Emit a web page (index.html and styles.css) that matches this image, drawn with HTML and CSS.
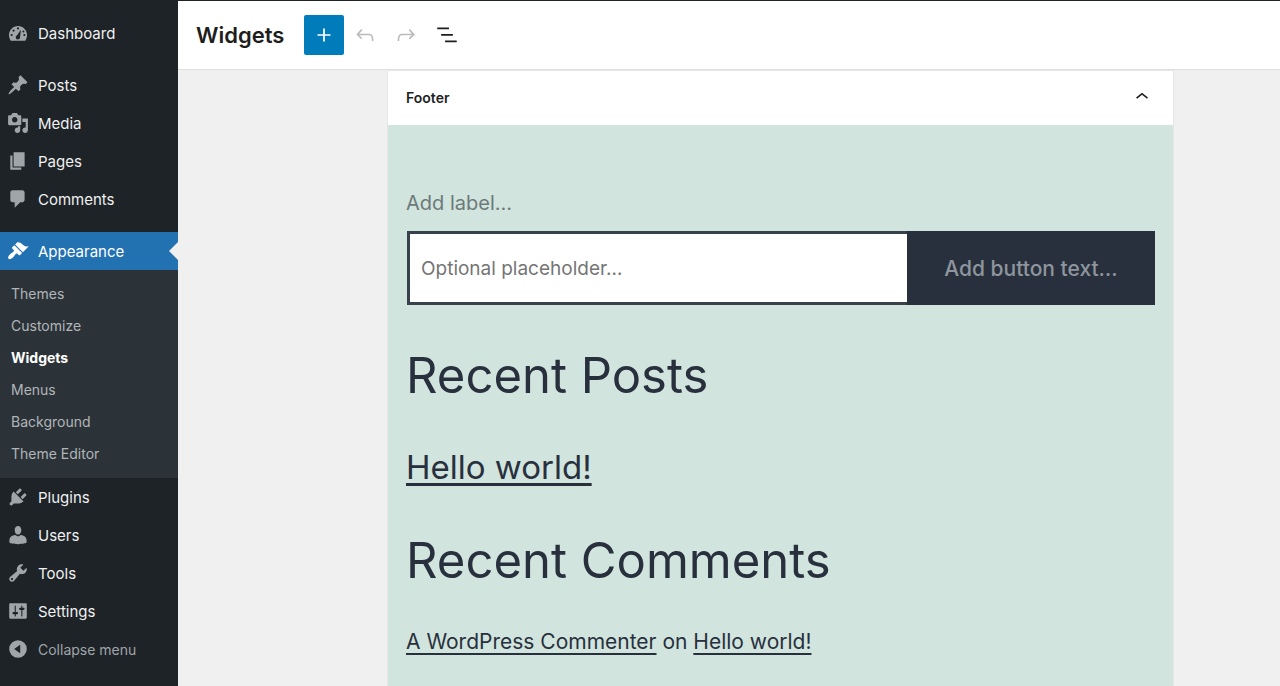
FILE: index.html
```html
<!DOCTYPE html>
<html lang="en">
<head>
<meta charset="utf-8">
<title>Widgets</title>
<link rel="stylesheet" href="styles.css">
</head>
<body>
<div class="app">
  <nav class="sidebar" aria-label="Main menu">
    <ul class="menu">
      <li><a class="menu-link" href="#"><svg class="menu-icon" viewBox="0 0 20 20"><path fill-rule="evenodd" d="M3.400 17h13.200C17.600 15.400 18.200 13.700 18.200 11.800c0-4.500-3.700-8.200-8.200-8.200s-8.200 3.700-8.200 8.200c0 1.900.6 3.600 1.600 5.200zM9 5.800a1 1 0 1 0 2 0 1 1 0 1 0-2 0zM5 7.800a1 1 0 1 0 2 0 1 1 0 1 0-2 0zM3.200 11.800a1 1 0 1 0 2 0 1 1 0 1 0-2 0zM14.800 11.800a1 1 0 1 0 2 0 1 1 0 1 0-2 0zM12.700 6.800l-.8 6.600a2 2 0 1 1-2.700-1.400zM14 8.600a.9.9 0 1 0 1.800 0 .9.9 0 1 0-1.800 0z"/></svg>Dashboard</a></li>
    </ul>
    <ul class="menu menu-content">
      <li><a class="menu-link" href="#"><svg class="menu-icon" viewBox="0 0 20 20"><path d="M10.44 3.02l1.82-1.82 6.36 6.35-1.83 1.82c-1.05-.68-2.48-.57-3.41.36l-.75.75c-.92.93-1.04 2.35-.35 3.41l-1.83 1.82-2.41-2.41-2.8 2.79c-.42.42-3.38 2.71-3.8 2.29s1.86-3.39 2.28-3.81l2.79-2.79L4.1 9.36l1.83-1.82c1.05.69 2.48.57 3.4-.36l.75-.75c.93-.92 1.05-2.35.36-3.41z"/></svg>Posts</a></li>
      <li><a class="menu-link" href="#"><svg class="menu-icon" viewBox="0 0 20 20"><path fill-rule="evenodd" d="M13 11V4c0-.55-.45-1-1-1h-1.670L9 1H5L3.670 3H2c-.55 0-1 .45-1 1v7c0 .55.45 1 1 1h10c.55 0 1-.45 1-1zM7 4.500c1.380 0 2.500 1.120 2.500 2.500S8.380 9.500 7 9.500 4.500 8.380 4.500 7 5.620 4.500 7 4.500zM14 6h5v10.500c0 1.380-1.120 2.500-2.500 2.500S14 17.880 14 16.500s1.120-2.500 2.500-2.500c.17 0 .34.02.5.05V9h-3V6zm-4 8.050V13h2v3.500c0 1.380-1.120 2.500-2.500 2.500S7 17.880 7 16.500 8.120 14 9.500 14c.17 0 .34.02.5.05z"/></svg>Media</a></li>
      <li><a class="menu-link" href="#"><svg class="menu-icon" viewBox="0 0 20 20"><path d="M6 15V2h10v13H6zm-1 1h8v2H3V5h2v11z"/></svg>Pages</a></li>
      <li><a class="menu-link" href="#"><svg class="menu-icon" viewBox="0 0 20 20"><path d="M5 2h9c1.100 0 2 .9 2 2v7c0 1.100-.9 2-2 2h-2l-5 5v-5H5c-1.100 0-2-.9-2-2V4c0-1.100.9-2 2-2z"/></svg>Comments</a></li>
    </ul>
    <ul class="menu menu-admin">
      <li>
        <a class="menu-link current" href="#"><svg class="menu-icon" viewBox="0 0 20 20"><path d="M14.48 11.06L7.41 3.99l1.5-1.5c.5-.56 2.3-.47 3.51.32 1.21.8 1.43 1.28 2.91 2.1 1.18.64 2.45 1.26 4.45.85zm-.71.71L6.7 4.7 4.93 6.47c-.39.39-.39 1.02 0 1.41l1.06 1.06c.39.39.39 1.03 0 1.42-.6.6-1.43 1.11-2.21 1.69-.35.26-.7.53-1.01.84C1.43 14.23.4 16.08 1.4 17.07c.99 1 2.84-.03 4.18-1.36.31-.31.58-.66.85-1.02.57-.78 1.08-1.61 1.69-2.21.39-.39 1.02-.39 1.41 0l1.06 1.06c.39.39 1.02.39 1.41 0z"/></svg>Appearance</a>
        <ul class="submenu">
          <li><a href="#">Themes</a></li>
          <li><a href="#">Customize</a></li>
          <li><a class="selected" href="#" aria-current="page">Widgets</a></li>
          <li><a href="#">Menus</a></li>
          <li><a href="#">Background</a></li>
          <li><a href="#">Theme Editor</a></li>
        </ul>
      </li>
      <li><a class="menu-link" href="#"><svg class="menu-icon" viewBox="0 0 20 20"><path d="M13.11 4.36L9.87 7.6 8 5.73l3.24-3.24c.35-.34 1.05-.2 1.56.32.52.51.66 1.21.31 1.55zm-8 1.77l.91-1.12 9.01 9.01-1.19.84c-.71.71-2.63 1.16-3.82 1.16H6.14L4.9 17.26c-.59.59-1.54.59-2.12 0-.59-.58-.59-1.53 0-2.12l1.24-1.24v-3.88c0-1.13.4-3.19 1.09-3.89zm7.26 3.97l3.24-3.24c.34-.35 1.04-.21 1.55.31.52.51.66 1.21.31 1.55l-3.24 3.25z"/></svg>Plugins</a></li>
      <li><a class="menu-link" href="#"><svg class="menu-icon" viewBox="0 0 20 20"><path d="M10 9.600c-2.200 0-3-2.200-3-4.100C7 3.500 8 1.800 10 1.800s3 1.700 3 3.700c0 1.900-.8 4.100-3 4.100zM10 11.300L12.600 10c2.700.2 5.200 2 5.200 4.800v2.300s-3.800 1.200-7.800 1.200-7.800-1.200-7.800-1.200v-2.300c0-2.800 2.500-4.600 5.200-4.800z"/></svg>Users</a></li>
      <li><a class="menu-link" href="#"><svg class="menu-icon" viewBox="0 0 20 20"><path fill-rule="evenodd" d="M16.68 9.77c-1.34 1.34-3.3 1.67-4.95.99l-5.41 6.52c-.99.99-2.59.99-3.58 0s-.99-2.59 0-3.57l6.52-5.42c-.68-1.65-.35-3.61.99-4.95 1.28-1.28 3.12-1.62 4.72-1.06l-2.89 2.89 2.82 2.82 2.86-2.87c.53 1.58.18 3.39-1.08 4.65zM3.81 16.21c.4.39 1.04.39 1.43 0 .4-.4.4-1.04 0-1.43-.39-.4-1.03-.4-1.43 0-.39.39-.39 1.03 0 1.43z"/></svg>Tools</a></li>
      <li><a class="menu-link" href="#"><svg class="menu-icon" viewBox="0 0 20 20"><path fill-rule="evenodd" d="M18 16V4c0-.55-.45-1-1-1H3c-.55 0-1 .45-1 1v12c0 .55.45 1 1 1h14c.55 0 1-.45 1-1zM8 11h1c.55 0 1 .45 1 1s-.45 1-1 1H8v1.500c0 .28-.22.5-.5.5s-.5-.22-.5-.5V13H6c-.55 0-1-.45-1-1s.45-1 1-1h1V5.500c0-.28.22-.5.5-.5s.5.22.5.5V11zm5-2h-1c-.55 0-1-.45-1-1s.45-1 1-1h1V5.500c0-.28.22-.5.5-.5s.5.22.5.5V7h1c.55 0 1 .45 1 1s-.45 1-1 1h-1v5.500c0 .28-.22.5-.5.5s-.5-.22-.5-.5V9z"/></svg>Settings</a></li>
      <li><button class="menu-link collapse" type="button"><svg class="menu-icon" viewBox="0 0 20 20"><path fill-rule="evenodd" d="M10 2a8 8 0 1 1 0 16 8 8 0 0 1 0-16zM12 13.800V6.200L6.500 10z"/></svg>Collapse menu</button></li>
    </ul>
  </nav>
  <main class="editor">
    <header class="toolbar">
      <h1 class="title">Widgets</h1>
      <button class="tool add" type="button" aria-label="Add block"><svg class="tool-icon" viewBox="0 0 24 24"><path d="M18 11.200h-5.200V6h-1.600v5.200H6v1.600h5.200V18h1.600v-5.200H18z"/></svg></button>
      <button class="tool muted" type="button" aria-label="Undo"><svg class="tool-icon" viewBox="0 0 24 24"><path d="M18.3 11.7c-.6-.6-1.4-.9-2.3-.9H6.700l2.900-3.300-1.100-1-4.500 5L8.500 16l1-1-2.700-2.700H16c.5 0 .9.2 1.300.5 1 1 1 3.400 1 4.500v.3h1.500v-.2c0-1.500 0-4.300-1.500-5.700z"/></svg></button>
      <button class="tool muted" type="button" aria-label="Redo"><svg class="tool-icon" viewBox="0 0 24 24"><path d="M15.600 6.500l-1.100 1 2.900 3.300H8c-.9 0-1.700.3-2.300.9-1.400 1.500-1.400 4.200-1.400 5.600v.2h1.500v-.3c0-1.100 0-3.500 1-4.500.3-.3.7-.5 1.300-.5h9.200L14.500 15l1.100 1.100 4.600-4.600-4.600-5z"/></svg></button>
      <button class="tool" type="button" aria-label="List view"><svg class="tool-icon" viewBox="0 0 24 24"><path d="M13.800 5H3v1.800h10.800V5zm-3.600 12v1.800H21V17H10.200zm7.200-6H6.600v1.800h10.800V11z"/></svg></button>
    </header>
    <div class="canvas">
      <section class="area">
        <h2 class="area-head"><button class="area-toggle" type="button" aria-expanded="true">Footer<svg class="tool-icon" viewBox="0 0 24 24"><path d="M6.500 12.400L12 8l5.500 4.400-.9 1.200L12 10l-4.500 3.600-1-1.200z"/></svg></button></h2>
        <div class="area-body">
          <form class="search">
            <label class="search-label" for="search-field">Add label…</label>
            <div class="search-row">
              <input class="search-input" id="search-field" type="text" placeholder="Optional placeholder…">
              <button class="search-button" type="button">Add button text…</button>
            </div>
          </form>
          <h2 class="heading">Recent Posts</h2>
          <p class="post"><a class="link" href="#">Hello world!</a></p>
          <h2 class="heading">Recent Comments</h2>
          <p class="comment"><a class="link" href="#">A WordPress Commenter</a> on <a class="link" href="#">Hello world!</a></p>
        </div>
      </section>
    </div>
  </main>
</div>
</body>
</html>
```
FILE: styles.css
```css
* { box-sizing: border-box; }
body {
  margin: 0;
  font-family: Inter, "Liberation Sans", sans-serif;
  color: #1e1e1e;
}
button, input { font: inherit; color: inherit; }
h1, h2, p, ul { margin: 0; padding: 0; }
ul { list-style: none; }
svg { flex: none; fill: currentColor; }

.app {
  display: flex;
  height: 100vh;
  overflow: hidden;
}

/* Sidebar */
.sidebar {
  flex: none;
  width: 178px;
  padding-top: 14px;
  background: #1d2327;
  overflow: hidden;
}
.menu-content { margin-top: 14px; }
.menu-admin { margin-top: 14px; }
.menu-link {
  position: relative;
  display: flex;
  align-items: center;
  gap: 9px;
  width: 100%;
  height: 38px;
  padding: 0 7px;
  border: 0;
  background: none;
  color: #f0f0f1;
  font-size: 15px;
  text-align: left;
  text-decoration: none;
}
.menu-icon {
  width: 22px;
  height: 22px;
  color: #a0a5aa;
}
.current { background: #2271b1; color: #fff; }
.current .menu-icon { color: #fff; }
.current::after {
  content: "";
  position: absolute;
  right: 0;
  top: 10px;
  border: 9px solid transparent;
  border-left-width: 0;
  border-right-color: #f0f0f1;
}
.submenu {
  padding: 8px 0;
  background: #2c3338;
}
.submenu a {
  display: block;
  padding: 0 11px;
  color: #b1b5b9;
  font-size: 14px;
  line-height: 32px;
  text-decoration: none;
}
.submenu .selected { color: #fff; font-weight: 700; }
.collapse { color: #a0a5aa; font-size: 14px; }

/* Editor */
.editor {
  flex: 1;
  min-width: 0;
  display: flex;
  flex-direction: column;
  border-top: 1px solid #1d2327;
  background: #f0f0f0;
}
.toolbar {
  flex: none;
  display: flex;
  align-items: center;
  gap: 1px;
  height: 69px;
  padding: 0 18px;
  border-bottom: 1px solid #e0e0e0;
  background: #fff;
}
.title {
  margin-right: 19px;
  font-size: 22px;
  font-weight: 600;
}
.tool {
  display: grid;
  place-items: center;
  width: 40px;
  height: 40px;
  padding: 0;
  border: 0;
  border-radius: 2px;
  background: none;
}
.tool-icon { width: 26px; height: 26px; }
.add { background: #007cba; color: #fff; }
.muted { color: #bbb; }

.canvas {
  flex: 1;
  overflow: hidden;
  padding: 1px 107px 0 210px;
}
.area {
  min-height: 100%;
  background: #d1e4dd;
  box-shadow: 0 0 0 1px #e6e6e6;
}
.area-head {
  padding-bottom: 2px;
  background: #fff;
}
.area-toggle {
  display: flex;
  align-items: center;
  justify-content: space-between;
  width: 100%;
  height: 52px;
  padding: 0 18px;
  border: 0;
  background: none;
  font-size: 14px;
  font-weight: 600;
}
.area-body {
  padding: 64px 18px;
  color: #28303d;
}
.search { padding-bottom: 36px; }
.search-label {
  display: block;
  margin-bottom: 14px;
  color: #6c7a7a;
  font-size: 20px;
  line-height: 28px;
}
.search-row {
  display: flex;
  height: 74px;
  margin-left: 1px;
}
.search-input {
  flex: 1;
  min-width: 0;
  padding: 0 11px;
  border: 3px solid #39414d;
  border-right: 0;
  border-radius: 0;
  background: #fff;
  font-size: 19px;
}
.search-input::placeholder { color: #757575; opacity: 1; }
.search-button {
  width: 248px;
  padding: 0;
  border: 0;
  background: #28303d;
  color: #8e959d;
  font-size: 21px;
  font-weight: 500;
}
.heading {
  font-size: 49px;
  font-weight: 400;
  line-height: 70px;
}
.post {
  margin: 26px 0 28px;
  font-size: 33px;
  line-height: 61px;
}
.comment {
  margin-top: 27px;
  font-size: 21px;
  line-height: 38px;
}
.link {
  color: inherit;
  text-decoration-thickness: 2px;
  text-underline-offset: 4px;
  text-decoration-skip-ink: none;
}
.post .link { text-decoration-thickness: 3px; }
```
